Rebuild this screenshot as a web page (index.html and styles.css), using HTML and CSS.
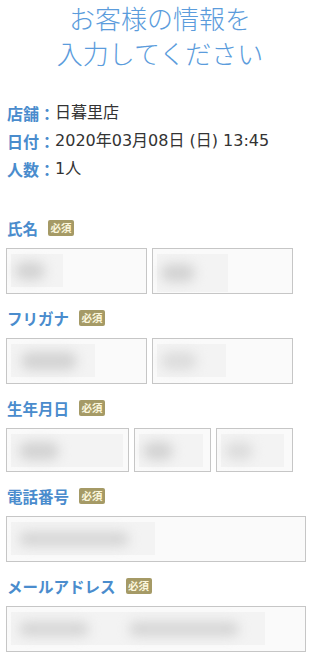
FILE: index.html
```html
<!DOCTYPE html>
<html lang="ja">
<head>
<meta charset="utf-8">
<link rel="stylesheet" href="styles.css">
</head>
<body>
<div class="page">
  <h1 class="title">お客様の情報を<br>入力してください</h1>
  <dl class="info">
    <div class="info-row"><dt>店舗：</dt><dd>日暮里店</dd></div>
    <div class="info-row"><dt>日付：</dt><dd>2020年03月08日 (日) 13:45</dd></div>
    <div class="info-row"><dt>人数：</dt><dd>1人</dd></div>
  </dl>

  <div class="field">
    <div class="label">氏名<span class="badge">必須</span></div>
    <div class="inputs split">
      <div class="box"><div class="ph" style="width:52px"><i class="blob" style="width:30px"></i></div></div>
      <div class="box"><div class="ph tall" style="width:71px"><i class="blob" style="width:34px"></i></div></div>
    </div>
  </div>

  <div class="field">
    <div class="label">フリガナ<span class="badge">必須</span></div>
    <div class="inputs split">
      <div class="box"><div class="ph" style="width:84px"><i class="blob" style="width:56px;margin-left:10px"></i></div></div>
      <div class="box"><div class="ph" style="width:69px"><i class="blob faint" style="width:36px"></i></div></div>
    </div>
  </div>

  <div class="field">
    <div class="label">生年月日<span class="badge">必須</span></div>
    <div class="inputs birth">
      <div class="box short"><div class="ph" style="width:112px"><i class="blob" style="width:40px;margin-left:8px"></i></div></div>
      <div class="box short"><div class="ph" style="width:64px"><i class="blob" style="width:30px"></i></div></div>
      <div class="box short"><div class="ph" style="width:63px"><i class="blob faint" style="width:28px"></i></div></div>
    </div>
  </div>

  <div class="field">
    <div class="label">電話番号<span class="badge">必須</span></div>
    <div class="inputs">
      <div class="box"><div class="ph" style="width:144px"><i class="blob long" style="width:110px;margin-left:8px"></i></div></div>
    </div>
  </div>

  <div class="field">
    <div class="label">メールアドレス<span class="badge">必須</span></div>
    <div class="inputs">
      <div class="box"><div class="ph" style="width:254px"><i class="blob long" style="width:70px;margin-left:8px"></i><i class="blob long" style="width:110px;margin-left:40px"></i></div></div>
    </div>
  </div>
</div>
</body>
</html>
```

FILE: styles.css
```css
* { box-sizing: border-box; }
html, body { margin: 0; padding: 0; background: #fff; }
body {
  font-family: "Noto Sans CJK JP", "Noto Sans", sans-serif;
  color: #333;
}
.page {
  width: 320px;
  padding: 0 14px 0 6px;
}
.title {
  margin: 0;
  text-align: center;
  font-size: 26px;
  line-height: 35px;
  font-weight: 300;
  color: #5b9cdc;
  padding-left: 8px;
}
.info {
  margin: 29px 0 0 0;
}
.info-row {
  display: flex;
  height: 28px;
  align-items: center;
  font-size: 16px;
  line-height: 28px;
}
.info-row dt {
  font-weight: 700;
  color: #4a8ccd;
  margin-left: 1px;
}
.info-row dd {
  margin: 0;
  color: #333;
  font-family: "DejaVu Sans", "Noto Sans CJK JP", sans-serif;
}
.field {
  margin-bottom: 14px;
}
.info + .field { margin-top: 35px; }
.label {
  display: flex;
  align-items: center;
  height: 20px;
  font-size: 15.5px;
  font-weight: 700;
  color: #4a8ccd;
  padding-left: 1px;
}
.badge {
  display: inline-flex;
  align-items: center;
  justify-content: center;
  width: 26px;
  height: 16px;
  margin-left: 10px;
  border-radius: 2px;
  background: #a59a66;
  color: #fbf6dc;
  font-size: 10.5px;
  font-weight: 700;
  line-height: 16px;
}
.inputs {
  display: flex;
  gap: 5px;
  margin-top: 10px;
}
.split { width: 287px; }
.split .box { flex: 1 1 0; }
.birth { width: 287px; }
.birth .box:first-child { flex: 0 0 123px; }
.birth .box { flex: 1 1 0; }
.box {
  flex: 1 1 auto;
  height: 46px;
  border: 1px solid #c6c6c6;
  background: #fafafa;
  padding: 5px 4px;
  display: flex;
  align-items: flex-start;
  overflow: hidden;
}
.box.short { height: 44px; }
.ph {
  height: 33px;
  background: #f3f3f3;
  display: flex;
  align-items: center;
}
.ph.tall { height: 38px; }
.blob {
  display: block;
  height: 18px;
  border-radius: 9px;
  background: #d2d2d2;
  filter: blur(6px);
  margin-left: 4px;
}
.blob.faint { background: #dcdcdc; }
.blob.long { height: 14px; background: #d4d4d4; }
```
